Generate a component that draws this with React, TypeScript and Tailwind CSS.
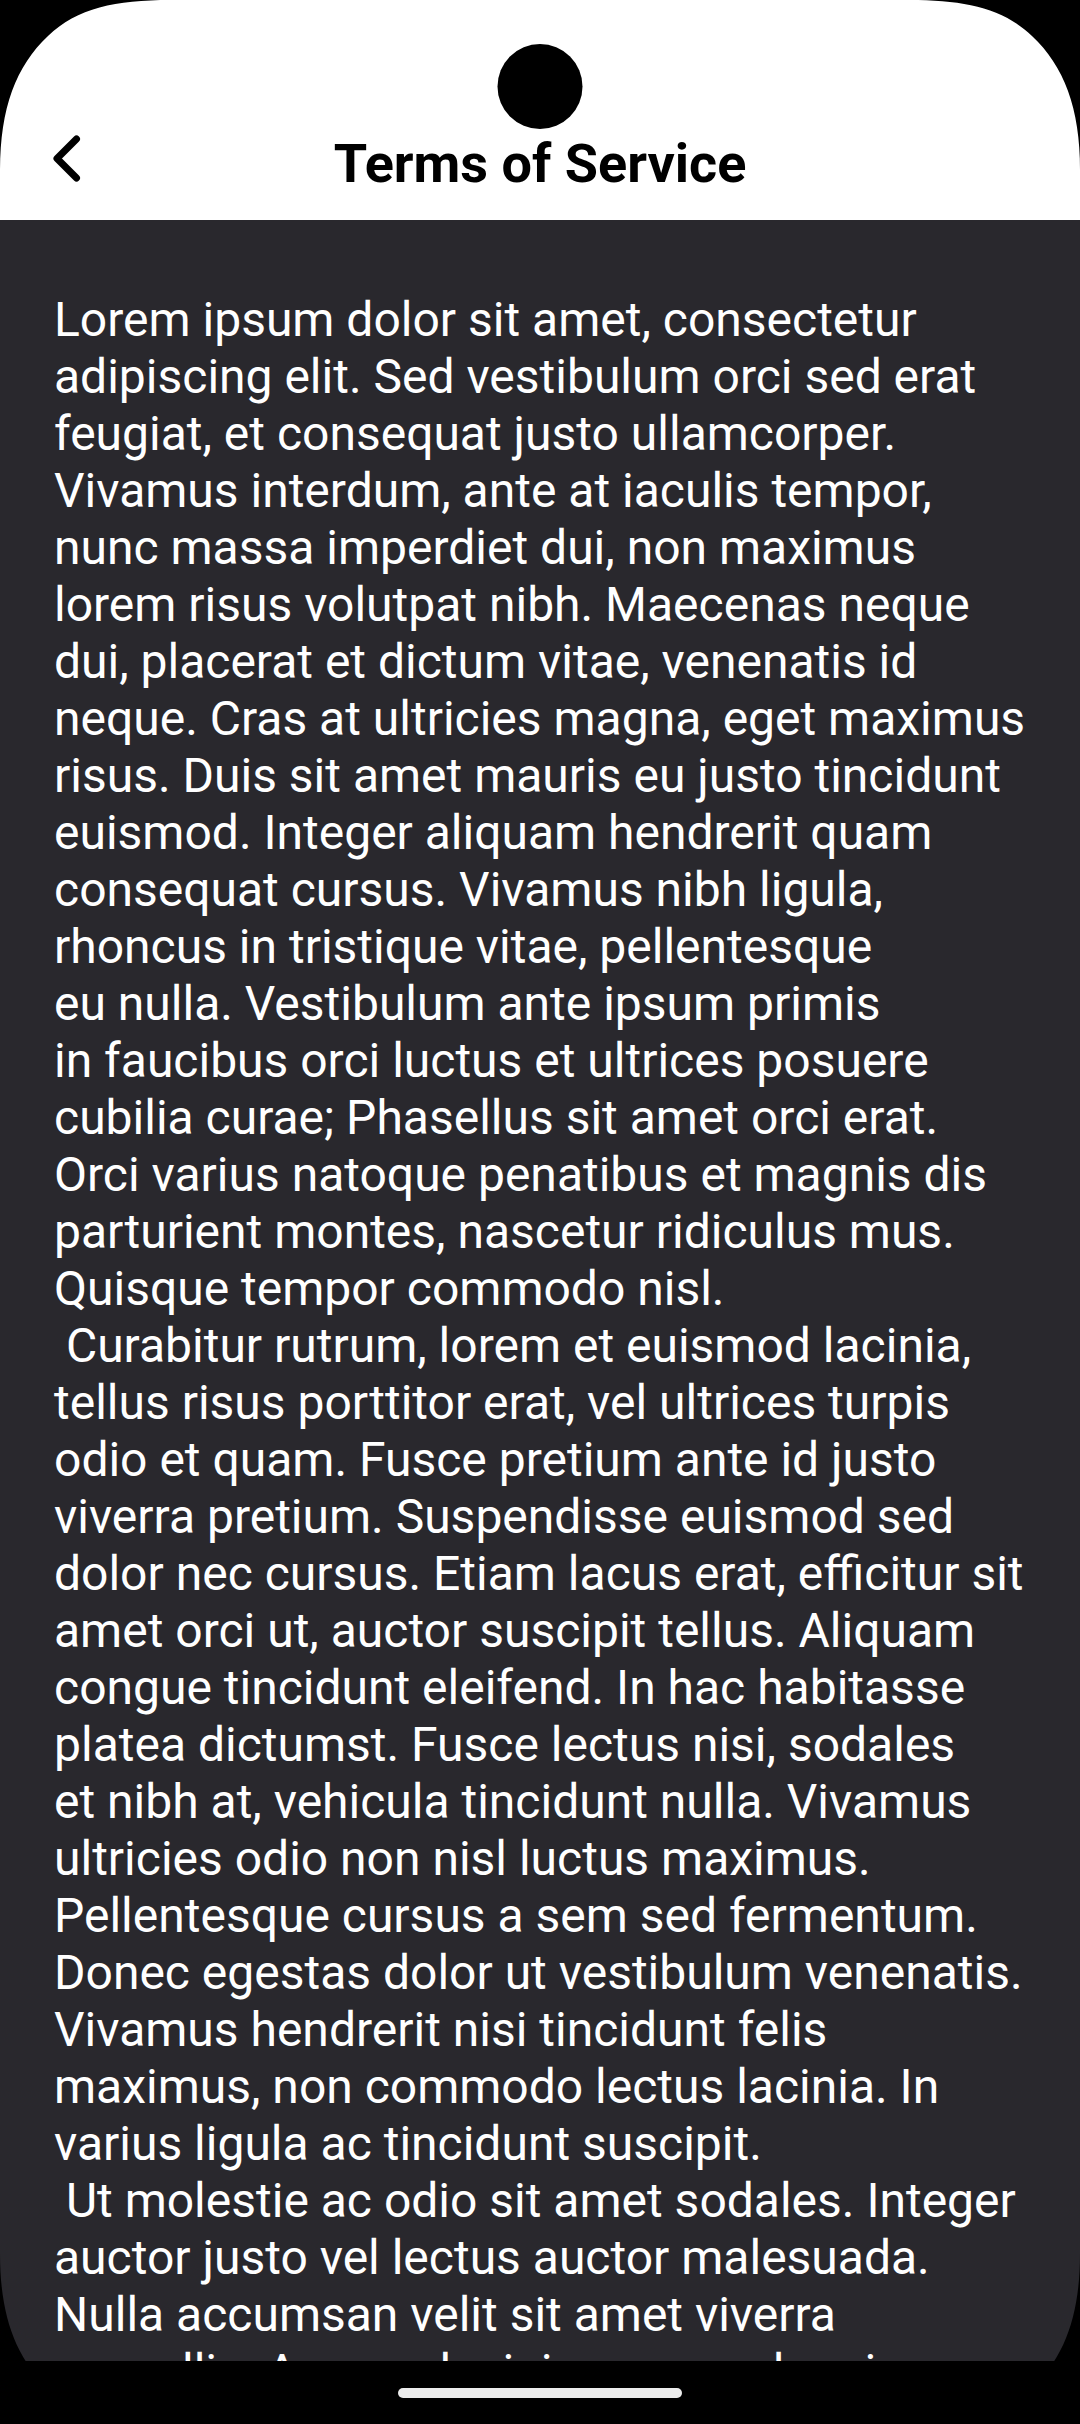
const sections = [
  "Lorem ipsum dolor sit amet, consectetur adipiscing elit. Sed vestibulum orci sed erat feugiat, et consequat justo ullamcorper. Vivamus interdum, ante at iaculis tempor, nunc massa imperdiet dui, non maximus lorem risus volutpat nibh. Maecenas neque dui, placerat et dictum vitae, venenatis id neque. Cras at ultricies magna, eget maximus risus. Duis sit amet mauris eu justo tincidunt euismod. Integer aliquam hendrerit quam consequat cursus. Vivamus nibh ligula, rhoncus in tristique vitae, pellentesque eu\u00a0nulla. Vestibulum ante ipsum primis in\u00a0faucibus orci luctus et ultrices posuere cubilia curae; Phasellus sit amet orci erat. Orci varius natoque penatibus et magnis dis parturient montes, nascetur ridiculus mus. Quisque tempor commodo nisl.",
  " Curabitur rutrum, lorem et euismod lacinia, tellus risus porttitor erat, vel ultrices turpis odio et quam. Fusce pretium ante id justo viverra pretium. Suspendisse euismod sed dolor nec cursus. Etiam lacus erat, efficitur sit amet orci ut, auctor suscipit tellus. Aliquam congue tincidunt eleifend. In hac habitasse platea dictumst. Fusce lectus nisi, sodales et\u00a0nibh\u00a0at, vehicula tincidunt nulla. Vivamus ultricies odio non nisl luctus maximus. Pellentesque cursus a sem sed fermentum. Donec egestas dolor ut vestibulum venenatis. Vivamus hendrerit nisi tincidunt felis maximus, non commodo lectus lacinia. In varius ligula ac tincidunt suscipit.",
  " Ut molestie ac odio sit amet sodales. Integer auctor justo vel lectus auctor malesuada. Nulla accumsan velit sit amet viverra convallis. Aenean lacinia quam vel orci",
];

function ScreenCorner({ className }: { className: string }) {
  return (
    <svg viewBox="0 0 170 170" className={`pointer-events-none absolute size-[170px] ${className}`} aria-hidden="true">
      <path d="M0 0H170C116 0 77 8 48 36C16 66 0 108 0 170Z" fill="#000" />
    </svg>
  );
}

export default function App() {
  return (
    <div className="relative flex h-screen flex-col overflow-hidden bg-black font-[Roboto,sans-serif]">
      <header className="grid shrink-0 grid-cols-[1fr_auto_1fr] items-center bg-white px-9 pt-[108px] pb-px text-black">
        <button type="button" aria-label="Back" className="flex size-[63px] items-center justify-center">
          <svg viewBox="0 0 63 63" className="size-[63px]" fill="none" stroke="currentColor" strokeWidth="7" strokeLinecap="round" strokeLinejoin="round" aria-hidden="true">
            <path d="M40.5 7L21 26.5L40.5 46" />
          </svg>
        </button>
        <h1 className="py-6 text-[54px] leading-[63px] font-bold">Terms of Service</h1>
      </header>

      <main className="min-h-0 flex-1 overflow-hidden bg-[#29282d] px-[54px] pt-[71px] text-[48px] leading-[57px] whitespace-pre-wrap text-white">
        {sections.map((text) => (
          <p key={text}>{text}</p>
        ))}
      </main>

      <footer className="flex h-[63px] shrink-0 items-center justify-center bg-black">
        <div className="h-[10px] w-[284px] rounded-full bg-[#ececec]" />
      </footer>

      <div className="absolute top-11 left-1/2 size-[85px] -translate-x-1/2 rounded-full bg-black" />
      <ScreenCorner className="top-0 left-0" />
      <ScreenCorner className="top-0 right-0 -scale-x-100" />
      <ScreenCorner className="bottom-0 left-0 -scale-y-100" />
      <ScreenCorner className="right-0 bottom-0 -scale-100" />
    </div>
  );
}
